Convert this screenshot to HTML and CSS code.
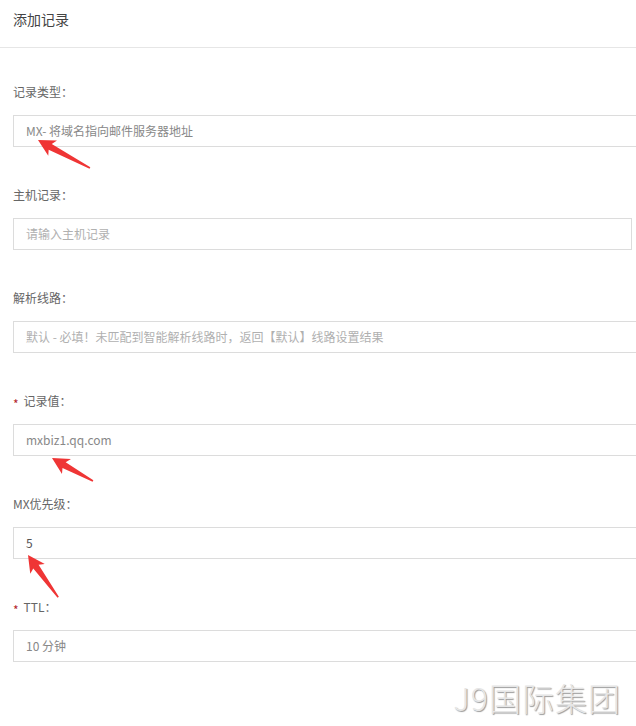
FILE: index.html
```html
<!DOCTYPE html>
<html lang="zh-CN">
<head>
  <meta charset="UTF-8">
  <title>添加记录</title>
  <meta name="viewport" content="width=device-width, initial-scale=1.0">
  <link rel="stylesheet" href="styles.css">
</head>
<body>
<div class="page">
  <div class="dialog-head">添加记录</div>

  <div class="form">
    <div class="field">
      <div class="label">记录类型：</div>
      <div class="input wide value-muted">MX- 将域名指向邮件服务器地址</div>
    </div>

    <div class="field">
      <div class="label">主机记录：</div>
      <div class="input placeholder">请输入主机记录</div>
    </div>

    <div class="field">
      <div class="label">解析线路：</div>
      <div class="input wide placeholder">默认 - 必填！未匹配到智能解析线路时，返回【默认】线路设置结果</div>
    </div>

    <div class="field">
      <div class="label"><span class="req">*</span>记录值：</div>
      <div class="input wide value-muted">mxbiz1.qq.com</div>
    </div>

    <div class="field">
      <div class="label">MX优先级：</div>
      <div class="input wide value">5</div>
    </div>

    <div class="field">
      <div class="label"><span class="req">*</span>TTL：</div>
      <div class="input wide value-muted">10 分钟</div>
    </div>
  </div>

  <!-- red marker arrows drawn over the form -->
  <svg class="marks" width="636" height="726" viewBox="0 0 636 726">
    <g fill="#ef3535">
      <polygon transform="translate(38 140) rotate(28.3)" points="0,0 17,-8.5 14,-3 59,-0.8 59,0.8 14,3.5 16.5,9"/>
      <polygon transform="translate(52 458) rotate(29.3)" points="0,0 17,-8.5 14,-3 47,-0.8 47,0.8 14,3.5 16.5,9"/>
      <polygon transform="translate(28 555) rotate(54.5)" points="0,0 17,-8.5 14,-3 52,-0.8 52,0.8 14,3.5 16.5,9"/>
    </g>
  </svg>

  <div class="stamp">J9国际集团</div>
</div>
</body>
</html>
```

FILE: styles.css
```css
body {
  margin: 0;
  background: #fff;
  font-family: "Noto Sans CJK SC", "Liberation Sans", sans-serif;
  color: #333;
  overflow: hidden;
}

.page {
  position: relative;
  width: 636px;
  height: 726px;
  overflow: hidden;
}

.dialog-head {
  height: 48px;
  box-sizing: border-box;
  padding: 9px 13px 0;
  font-size: 14px;
  line-height: 20px;
  color: #444;
  border-bottom: 1px solid #e6e6e6;
}

.form {
  display: flex;
  flex-direction: column;
  gap: 38px;
  padding: 34px 0 0 13px;
}

.field {
  display: flex;
  flex-direction: column;
  gap: 13px;
}

.label {
  display: flex;
  align-items: center;
  height: 20px;
  font-size: 12px;
  line-height: 20px;
  color: #666;
}

/* required-field marker */
.req {
  color: #b3262b;
  margin-right: 5px;
  padding-top: 5px;
  font-size: 12px;
  line-height: 12px;
}

.input {
  box-sizing: border-box;
  width: 619px;
  height: 32px;
  padding: 0 12px;
  border: 1px solid #dcdcdc;
  font-size: 12px;
  line-height: 30px;
  white-space: nowrap;
}

.input.wide {
  width: 640px;
}

.placeholder {
  color: #b0b0b0;
}

.value-muted {
  color: #888;
}

.value {
  color: #555;
}

.marks {
  position: absolute;
  left: 0;
  top: 0;
  pointer-events: none;
}

.stamp {
  position: absolute;
  right: 15px;
  top: 680px;
  font-size: 32px;
  line-height: 34px;
  font-weight: 300;
  color: #e6e6e6;
  text-shadow: 1px 1px 1px #9a9a9a;
  letter-spacing: 1px;
}
```
